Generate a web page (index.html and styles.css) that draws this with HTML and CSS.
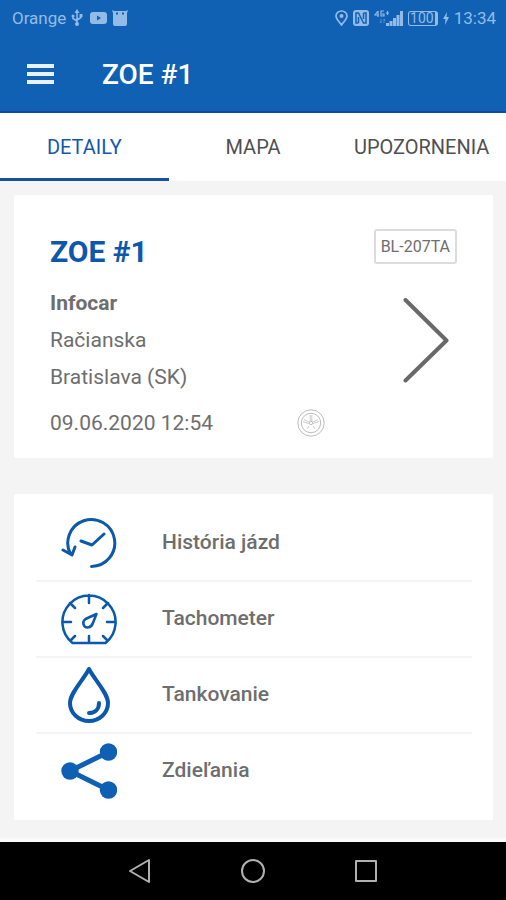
FILE: index.html
```html
<!DOCTYPE html>
<html lang="sk">
<head>
<meta charset="utf-8">
<meta name="viewport" content="width=device-width, initial-scale=1">
<title>ZOE #1</title>
<link rel="stylesheet" href="styles.css">
</head>
<body>
<header class="top">
  <div class="status">
    <div class="status-group">
      <span>Orange</span>
      <svg class="usb" width="12" height="18" viewBox="0 0 12 18" aria-hidden="true"><path d="M6 3v11M2 7v2.500L6 12M10 6v2.500L6 11" fill="none" stroke="currentColor" stroke-width="1.500"/><path d="M6 0l2.500 4h-5z"/><circle cx="6" cy="15" r="2"/><circle cx="2" cy="7" r="1.500"/><path d="M8.500 5h3v3h-3z"/></svg>
      <svg class="video" width="17" height="12" viewBox="0 0 17 12" aria-hidden="true"><path fill-rule="evenodd" d="M3 0h11q3 0 3 3v6q0 3-3 3H3q-3 0-3-3V3q0-3 3-3zm4 3.500v5L11 6z"/></svg>
      <svg width="16" height="16" viewBox="0 0 16 16" aria-hidden="true"><path fill-rule="evenodd" d="M0 0l2 1h12l2-1-1 3v3H1V3zm4 2.500v2h2v-2zm6 0v2h2v-2z"/><path d="M1 6h14v8q0 2-2 2H3q-2 0-2-2z"/></svg>
    </div>
    <div class="status-group">
      <svg width="13" height="16" viewBox="0 0 13 16" aria-hidden="true"><path d="M6.500 15C4 11.500 1 9 1 6a5.500 5 0 0 1 11 0c0 3-3 5.500-5.500 9z" fill="none" stroke="currentColor" stroke-width="1.700"/><circle cx="6.500" cy="6" r="2"/></svg>
      <svg class="nfc" width="16" height="16" viewBox="0 0 16 16" aria-hidden="true"><rect width="16" height="16" rx="3"/><path d="M5.500 13H3V3h2.500l5 10H13V3h-2.500M5.500 13V7M10.500 3v6" fill="none" stroke="#1061b3" stroke-width="1.500"/></svg>
      <svg class="signal" width="29" height="16" viewBox="0 0 29 16" aria-hidden="true"><path d="M4 1L1 5h4M4 1v6M10 1H7v5h3V4H8M12 3h3M13.500 1v4" fill="none" stroke="currentColor" stroke-width="1.200"/><path d="M7 9v4l-1-1.500M10 13V9l1 1.500" fill="none" stroke="currentColor" stroke-opacity=".5"/><path d="M12 13h3v3h-3zM15.500 11h3v5h-3zM19 8h3v8h-3zM22.500 5h3v11h-3zM26 1h3v15h-3z"/></svg>
      <span class="battery">100</span>
      <svg class="bolt" width="6" height="13" viewBox="0 0 6 13" aria-hidden="true"><path d="M4 0L0 7h2.500L2 13l4-8H3.500z"/></svg>
      <time>13:34</time>
    </div>
  </div>
  <div class="appbar">
    <button class="menu" type="button" aria-label="Menu"><svg width="27" height="20" viewBox="0 0 27 20"><path d="M0 0h27v4H0zM0 8h27v4H0zM0 16h27v4H0z"/></svg></button>
    <h1>ZOE #1</h1>
  </div>
</header>
<nav class="tabs">
  <a class="tab active" href="#detaily" aria-current="page">DETAILY</a>
  <a class="tab" href="#mapa">MAPA</a>
  <a class="tab" href="#upozornenia">UPOZORNENIA</a>
</nav>
<main id="detaily">
  <section class="card vehicle">
    <div class="vehicle-head"><h2>ZOE #1</h2><span class="plate">BL-207TA</span></div>
    <div class="vehicle-body">
      <div class="place">
        <strong>Infocar</strong>
        <span>Račianska</span>
        <span>Bratislava (SK)</span>
      </div>
      <a class="next" href="#mapa" aria-label="Zobraziť"><svg width="46" height="86" viewBox="0 0 46 86"><path d="M2.500 2L43.500 42.500 2.500 82.500" fill="none" stroke="#696969" stroke-width="4" stroke-linecap="round" stroke-linejoin="round"/></svg></a>
    </div>
    <div class="vehicle-foot">
      <time>09.06.2020 12:54</time>
      <svg width="28" height="28" viewBox="0 0 28 28" fill="none" stroke="#bdbdbd" aria-hidden="true"><circle cx="14" cy="14" r="13.200"/><circle cx="14" cy="14" r="9.700"/><circle cx="14" cy="14" r="1.800"/><path d="M13.200 12V6M14.800 12V6M12 13L7 10.500M11.700 14.500L6 12.500M16 13l5-2.500M16.300 14.500L22 12.500M12 17l-2 3M16 17l2 3" stroke-width=".8"/></svg>
    </div>
  </section>
  <nav class="card list">
    <a class="row" href="#historia">
      <span class="icon"><svg width="56" height="52" viewBox="0 0 56 52" fill="none" stroke="#0b59ab" stroke-width="3" stroke-linecap="round" stroke-linejoin="round"><path d="M9.500 37A23.500 23.500 0 1 1 30.500 49.500M2 33l9 5L14 30M20 24l11 4 12-11"/></svg></span>
      <span class="label">História jázd</span>
    </a>
    <a class="row" href="#tachometer">
      <span class="icon"><svg width="56" height="52" viewBox="0 0 56 52" fill="none" stroke="#0b59ab" stroke-width="2.500" stroke-linecap="round" stroke-linejoin="round"><path d="M11.500 50A26.600 26.600 0 1 1 44.500 50zM28 2v8M2 29h8M54 29h-8M9 10l5 5M47 10l-5 5M10 47l4-4M46 47l-4-4M28 49v-6"/><path d="M35.500 21L24.500 26c-4 3-2 8.500 2 8.500s5-3 6-6z"/></svg></span>
      <span class="label">Tachometer</span>
    </a>
    <a class="row" href="#tankovanie">
      <span class="icon"><svg width="42" height="56" viewBox="0 0 42 56" fill="none" stroke="#0b59ab" stroke-width="4" stroke-linecap="round" stroke-linejoin="round"><path d="M21 2C16 12 2 26 2 36a19 18 0 0 0 38 0C40 26 26 12 21 2z"/><path d="M31 36c0 6-4 10-10 10"/></svg></span>
      <span class="label">Tankovanie</span>
    </a>
    <a class="row" href="#zdielania">
      <span class="icon"><svg width="56" height="56" viewBox="0 0 56 56" fill="#0f5fb5"><path d="M47.500 9L9 28l38.500 19" fill="none" stroke="#0f5fb5" stroke-width="5"/><circle cx="9" cy="28" r="8.700"/><circle cx="47.500" cy="9" r="8.700"/><circle cx="47.500" cy="47" r="8.700"/></svg></span>
      <span class="label">Zdieľania</span>
    </a>
  </nav>
</main>
<footer class="sysnav">
  <button type="button" aria-label="Späť"><svg width="24" height="26" viewBox="0 0 24 26"><path d="M21 2v22L2 13z"/></svg></button>
  <button type="button" aria-label="Domov"><svg width="26" height="26" viewBox="0 0 26 26"><circle cx="13" cy="13" r="11"/></svg></button>
  <button type="button" aria-label="Prehľad"><svg width="24" height="24" viewBox="0 0 24 24"><rect x="2" y="2" width="20" height="20"/></svg></button>
</footer>
</body>
</html>
```
FILE: styles.css
```css
* { box-sizing: border-box; }

body {
  margin: 0;
  min-height: 100vh;
  display: flex;
  flex-direction: column;
  background: #f4f4f4;
  color: #6e6e6e;
  font-family: Roboto, "Liberation Sans", sans-serif;
  font-size: 21px;
}

h1, h2 { margin: 0; }
a { color: inherit; text-decoration: none; }
svg { display: block; flex: none; }
button { padding: 0; border: 0; background: none; }

.top {
  background: #1061b3;
  border-bottom: 2px solid #0b4ca0;
  color: #fff;
}

.status {
  display: flex;
  justify-content: space-between;
  height: 36px;
  padding: 0 10px 0 12px;
  color: #93bbe8;
  font-size: 17px;
}
.status svg { fill: currentColor; }
.status-group { display: flex; align-items: center; gap: 5px; }
.usb { margin-right: 2px; }
.battery {
  display: flex;
  align-items: center;
  height: 15px;
  padding: 0 1px;
  border: 1px solid currentColor;
  border-right-width: 3px;
  border-radius: 3px;
  font-size: 14px;
}

.appbar {
  display: flex;
  align-items: center;
  gap: 48px;
  height: 75px;
  padding: 0 27px;
}
.menu svg { fill: #e8f2fc; }
.appbar h1 { font-size: 28px; font-weight: 500; line-height: 36px; padding-top: 2px; }

.tabs {
  display: grid;
  grid-template-columns: repeat(3, 1fr);
  height: 68px;
  background: #fff;
  color: #505050;
  font-size: 20px;
}
.tab {
  display: flex;
  align-items: center;
  justify-content: center;
  border-top: 3px solid transparent;
  border-bottom: 3px solid transparent;
}
.tab.active {
  border-bottom-color: #1a4fa3;
  color: #1558ab;
}

main {
  flex: 1;
  display: flex;
  flex-direction: column;
  gap: 36px;
  padding: 14px 13px 18px 14px;
}
.card { background: #fff; border-radius: 2px; }

.vehicle { padding: 34px 36px 15px; }
.vehicle-head { display: flex; justify-content: space-between; align-items: flex-start; }
.vehicle-head h2 {
  color: #0f57ab;
  font-size: 30px;
  line-height: 46px;
  font-weight: 700;
}
.plate {
  height: 35px;
  padding: 0 5px;
  border: 2px solid #dcdcdc;
  border-radius: 3px;
  font-size: 16px;
  line-height: 31px;
}
.vehicle-body {
  display: flex;
  justify-content: space-between;
  align-items: center;
  padding: 10px 8px 6px 0;
}
.place { display: flex; flex-direction: column; line-height: 37px; }
.place strong { font-weight: 700; }
.vehicle-foot {
  display: flex;
  align-items: center;
  gap: 84px;
  height: 41px;
}

.list { padding: 12px 21px 10px 22px; }
.row {
  display: flex;
  align-items: center;
  height: 76px;
  padding-bottom: 2px;
  font-weight: 500;
}
.row:not(:last-child) { border-bottom: 2px solid #f4f4f4; padding-bottom: 0; }
.label { padding-bottom: 2px; }
.icon {
  display: flex;
  justify-content: center;
  width: 106px;
  margin-right: 20px;
}

.sysnav {
  display: flex;
  justify-content: center;
  align-items: center;
  gap: 88px;
  height: 62px;
  border-top: 4px solid #fafafa;
  background: #000;
}
.sysnav svg { fill: none; stroke: #b0b0b0; stroke-width: 2; stroke-linejoin: round; }
```
